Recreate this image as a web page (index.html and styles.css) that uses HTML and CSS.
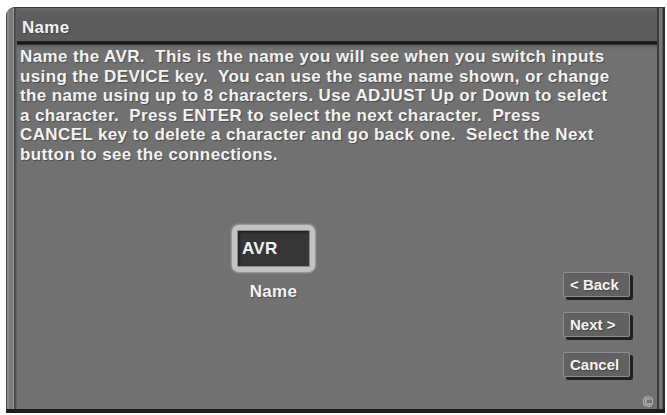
FILE: index.html
```html
<!DOCTYPE html>
<html>
<head>
<meta charset="utf-8">
<link rel="stylesheet" href="styles.css">
</head>
<body>
<div class="frame">
  <div class="edge-left"></div>
  <div class="main">
    <div class="titlebar">Name</div>
    <div class="rule"></div>
    <div class="content">
      <p class="intro">Name the AVR.&nbsp; This is the name you will see when you switch inputs<br>using the DEVICE key.&nbsp; You can use the same name shown, or change<br>the name using up to 8 characters. Use ADJUST Up or Down to select<br>a character.&nbsp; Press ENTER to select the next character.&nbsp; Press<br>CANCEL key to delete a character and go back one.&nbsp; Select the Next<br>button to see the connections.</p>
      <div class="lower">
        <div class="field-col">
          <div class="field">AVR</div>
          <div class="field-label">Name</div>
        </div>
        <div class="buttons">
          <button class="btn">&lt; Back</button>
          <button class="btn">Next &gt;</button>
          <button class="btn">Cancel</button>
        </div>
      </div>
      <div class="mark">©</div>
    </div>
  </div>
  <div class="edge-right"></div>
</div>
</body>
</html>
```
FILE: styles.css
```css
html, body {
  margin: 0;
  padding: 0;
  background: #ffffff;
}
body {
  font-family: "Liberation Sans", Arial, sans-serif;
  font-weight: bold;
  color: #f3f3f3;
}
.frame {
  margin: 7px 0 0 6px;
  width: 659px;
  height: 406px;
  box-sizing: border-box;
  display: flex;
  border-top: 1px solid #3a3a3a;
  border-bottom: 4px solid #1c1c1c;
  border-top-left-radius: 9px;
  overflow: hidden;
  background: #717171;
}
.edge-left {
  width: 11px;
  flex: none;
  background: linear-gradient(to right, #4a4a4a 0 1px, #8c8c8c 1px 3px, #7c7c7c 3px 7px, #959595 7px 8px, #4c4c4c 8px 10px, #626262 10px 11px);
}
.edge-right {
  width: 8px;
  flex: none;
  background: linear-gradient(to right, #3c3c3c 0 2px, #787878 2px 5px, #5c5c5c 5px 6px, #2c2c2c 6px 8px);
}
.main {
  flex: 1;
  display: flex;
  flex-direction: column;
  min-width: 0;
}
.titlebar {
  height: 33px;
  box-sizing: border-box;
  padding: 10px 0 0 5px;
  font-size: 17px;
  line-height: 20px;
  letter-spacing: 0.3px;
  background: linear-gradient(to bottom, #6c6c6c 0, #5e5e5e 4px, #5b5b5b 100%);
  text-shadow: 1px 1px 1px rgba(0,0,0,0.35);
}
.rule {
  height: 4px;
  background: linear-gradient(to bottom, #2c2c2c, #101010 50%, #3a3a3a);
}
.content {
  flex: 1;
  display: flex;
  flex-direction: column;
  background: linear-gradient(to bottom, #5f5f5f 0, #6d6d6d 3px, #717171 6px);
}
.intro {
  margin: 2px 0 0 3px;
  font-size: 17px;
  line-height: 19.6px;
  letter-spacing: 0.38px;
  white-space: nowrap;
  text-shadow: 1px 1px 1px rgba(0,0,0,0.35);
}
.lower {
  display: flex;
  justify-content: space-between;
  align-items: flex-start;
}
.field-col {
  margin: 60px 0 0 215px;
  width: 83px;
  display: flex;
  flex-direction: column;
  align-items: center;
}
.field {
  width: 83px;
  height: 47px;
  box-sizing: border-box;
  border: 5px solid #c2c2c2;
  border-radius: 7px;
  background: #363636;
  box-shadow: 0 0 2px 1px #a4a4a4, inset 0 0 0 1px #8a8a8a, inset 2px 2px 3px #161616;
  padding-left: 5px;
  font-size: 17px;
  line-height: 37px;
  letter-spacing: 0.3px;
}
.field-label {
  margin-top: 10px;
  font-size: 17px;
  line-height: 20px;
  letter-spacing: 0.3px;
  text-shadow: 1px 1px 1px rgba(0,0,0,0.35);
}
.buttons {
  margin: 107px 27px 0 0;
  display: flex;
  flex-direction: column;
  gap: 15px;
}
.btn {
  width: 67px;
  height: 25px;
  box-sizing: border-box;
  margin: 0;
  padding: 0 0 0 6px;
  text-align: left;
  font-family: "Liberation Sans", Arial, sans-serif;
  font-weight: bold;
  font-size: 15px;
  color: #f3f3f3;
  background: #616161;
  border: 1px solid #8e8e8e;
  border-radius: 2px;
  box-shadow: 3px 3px 0 #202020;
  text-shadow: 1px 1px 1px rgba(0,0,0,0.3);
}
.mark {
  margin-top: auto;
  align-self: flex-end;
  margin-right: 4px;
  margin-bottom: 0;
  font-size: 14px;
  line-height: 13px;
  font-weight: normal;
  color: #dadada;
}
```
